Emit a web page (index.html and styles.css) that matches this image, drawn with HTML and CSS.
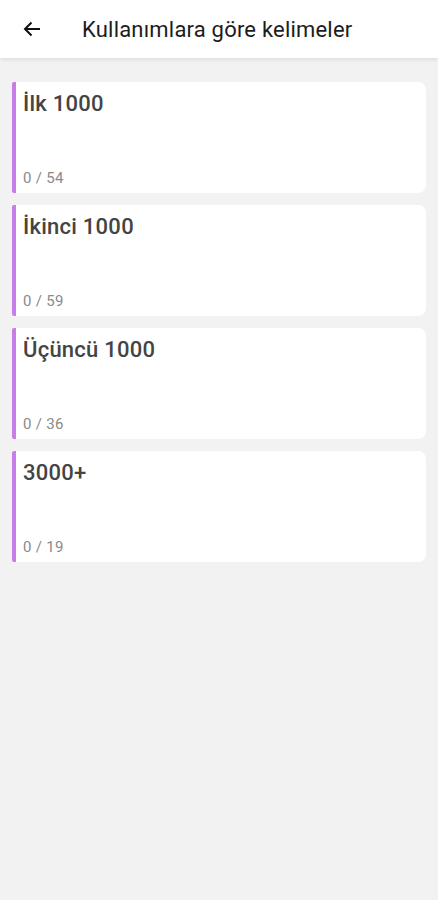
FILE: index.html
```html
<!DOCTYPE html>
<html>
<head>
	<meta http-equiv="Content-Type" content="text/html; charset=utf-8">
	<title>Kullanımlara göre kelimeler</title>
	<link rel="stylesheet" href="styles.css">
</head>
<body>
	<div class="topbar">
		<span class="back">
			<svg width="18" height="16" viewBox="0 0 18 16"><path d="M17 8H2M8.5 1.5L2 8l6.5 6.5" fill="none" stroke="#111" stroke-width="2"/></svg>
		</span>
		<h1>Kullanımlara göre kelimeler</h1>
	</div>

	<div class="list">
		<div class="card">
			<div class="card-title">İlk 1000</div>
			<div class="card-count">0 / 54</div>
		</div>
		<div class="card">
			<div class="card-title">İkinci 1000</div>
			<div class="card-count">0 / 59</div>
		</div>
		<div class="card">
			<div class="card-title">Üçüncü 1000</div>
			<div class="card-count">0 / 36</div>
		</div>
		<div class="card">
			<div class="card-title">3000+</div>
			<div class="card-count">0 / 19</div>
		</div>
	</div>
</body>
</html>
```

FILE: styles.css
```css
* {padding: 0; margin: 0; box-sizing: border-box;}
body {background: #f2f2f2; font-family: Roboto, "Noto Sans", sans-serif; min-height: 900px;}
.topbar {height: 58px; background: #fff; display: flex; align-items: center; box-shadow: 0 2px 4px rgba(0,0,0,0.08);}
.topbar .back {width: 82px; padding-left: 23px; display: flex; align-items: center;}
.topbar h1 {font-size: 22px; font-weight: 400; color: #1c1c1c; letter-spacing: 0.2px;}
.list {padding: 24px 12px 0; display: flex; flex-direction: column; gap: 12px;}
.card {height: 111px; background: #fff; border-left: 4px solid #c77ee8; border-radius: 2px 8px 8px 2px; padding: 8px 7px 6px; display: flex; flex-direction: column; justify-content: space-between;}
.card-title {font-size: 22px; line-height: 28px; font-weight: 500; color: #444; letter-spacing: 0.25px;}
.card-count {font-size: 15px; line-height: 18px; color: #8a8a8a; letter-spacing: 0.3px;}
```
